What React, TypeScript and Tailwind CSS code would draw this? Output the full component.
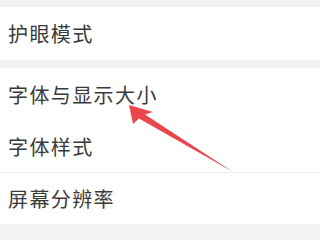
const font = { fontFamily: '"Noto Sans CJK SC", "Noto Sans", sans-serif' };

const Row = ({ label, className }: { label: string; className: string }) => (
  <div className={"flex items-center bg-white pl-[8px] " + className}>
    <span className="text-[20px] leading-none tracking-[1.4px] text-[#3a3a3a]">{label}</span>
  </div>
);

export default function App() {
  return (
    <div className="relative w-[320px] h-[240px] overflow-hidden bg-[#f3f1f1]" style={font}>
      <div className="flex flex-col">
        <div className="h-[7px]" />
        <Row label="护眼模式" className="h-[53px]" />
        <div className="h-[8px]" />
        <Row label="字体与显示大小" className="h-[53px]" />
        <Row label="字体样式" className="h-[51px]" />
        <div className="h-px bg-[#efefef]" />
        <Row label="屏幕分辨率" className="h-[51px]" />
      </div>

      {/* red callout arrow */}
      <svg className="absolute left-0 top-0 pointer-events-none" width="320" height="240" viewBox="0 0 320 240">
        <polygon
          points="129,105 153,112 145,114.5 233,172 139,118.5 133,124"
          fill="#e9474b"
        />
      </svg>
    </div>
  );
}
